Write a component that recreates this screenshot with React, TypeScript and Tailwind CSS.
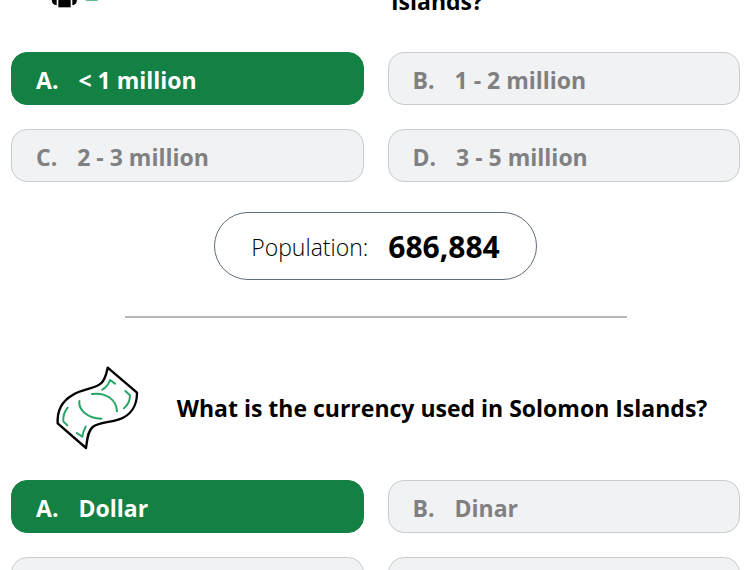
import React from 'react';

interface Option {
  letter: string;
  label: string;
  correct?: boolean;
}

interface QuestionProps {
  icon: React.ReactNode;
  title: string;
  options: Option[];
  className?: string;
}

const populationOptions: Option[] = [
  { letter: 'A', label: '< 1 million', correct: true },
  { letter: 'B', label: '1 - 2 million' },
  { letter: 'C', label: '2 - 3 million' },
  { letter: 'D', label: '3 - 5 million' },
];

const currencyOptions: Option[] = [
  { letter: 'A', label: 'Dollar', correct: true },
  { letter: 'B', label: 'Dinar' },
  { letter: 'C', label: 'Pound' },
  { letter: 'D', label: 'Franc' },
];

const PeopleIcon = () => (
  <svg viewBox="0 0 300 315" className="w-[100px] shrink-0" aria-hidden="true">
    <circle cx="73" cy="95" r="24" />
    <path d="M55 130h37v111H55z" />
    <path d="M50 130v105q-15-2-15-18v-72q0-15 15-15zM97 130v105q14-2 14-18v-72q0-15-14-15z" />
    <path d="M137 219h36M137 190h70M137 160h100" fill="none" stroke="#2fa567" strokeWidth="5" />
  </svg>
);

const BanknoteIcon = () => (
  <svg viewBox="0 0 330 315" className="w-[110px] shrink-0" fill="none" aria-hidden="true">
    <path
      d="M203 38L291 113C291 150 274 181 237 193C205 204 178 200 158 216C142 230 142 255 138 279L53 205C51 166 68 137 98 120C132 99 165 103 184 84C197 71 199 55 203 38Z"
      stroke="#000"
      strokeWidth="7"
      strokeLinejoin="round"
    />
    <g stroke="#27a567" strokeWidth="6" strokeLinecap="round" strokeLinejoin="round">
      <path d="M156 117C195 111 229 132 231 169" />
      <path d="M118 138C115 166 144 190 184 191" />
      <path d="M187 104Q204 94 210 75L225 86" />
      <path d="M256 108L270 121Q270 145 252 160" />
      <path d="M83 158Q68 176 70 199L82 211" />
      <path d="M137 215Q129 228 127 245L110 234" />
    </g>
  </svg>
);

const OptionButton: React.FC<Option> = ({ letter, label, correct }) => (
  <button
    type="button"
    className={`flex items-center gap-5 rounded-2xl border px-6 pt-[10px] pb-[6px] text-left text-[23px] leading-[35px] font-bold ${
      correct
        ? 'border-[#138044] bg-[#138044] text-white'
        : 'border-[#c8ccd0] bg-[#f0f2f4] text-[#808080]'
    }`}
  >
    <span>{letter}.</span>
    <span>{label}</span>
  </button>
);

const Question: React.FC<QuestionProps> = ({ icon, title, options, className = '' }) => (
  <section className={className}>
    <div className="flex items-center pt-[37px] pr-[6px] pb-5 pl-[29px]">
      {icon}
      <h2 className="flex-1 text-center text-[23px] leading-[42px] font-bold">{title}</h2>
    </div>
    <div className="grid grid-cols-2 gap-6">
      {options.map((option) => (
        <OptionButton key={option.letter} {...option} />
      ))}
    </div>
  </section>
);

export default function App() {
  return (
    <main className="h-screen overflow-hidden bg-white pr-[14px] pl-[11px] font-['Open_Sans','Noto_Sans',sans-serif] text-black">
      <Question
        className="-mt-[110px]"
        icon={<PeopleIcon />}
        title="What is the current population of the Solomon Islands?"
        options={populationOptions}
      />
      <div className="mt-[30px] flex justify-center">
        <p className="flex items-center gap-5 rounded-full border border-[#5f6b7a] px-9 pt-[13px] pb-[11px] leading-[42px]">
          <span className="text-[23px] font-light">Population:</span>
          <strong className="text-[30px] font-bold">686,884</strong>
        </p>
      </div>
      <hr className="mx-auto mt-9 w-[502px] max-w-full border-t-2 border-[#b8b8b8]" />
      <Question icon={<BanknoteIcon />} title="What is the currency used in Solomon Islands?" options={currencyOptions} />
    </main>
  );
}
